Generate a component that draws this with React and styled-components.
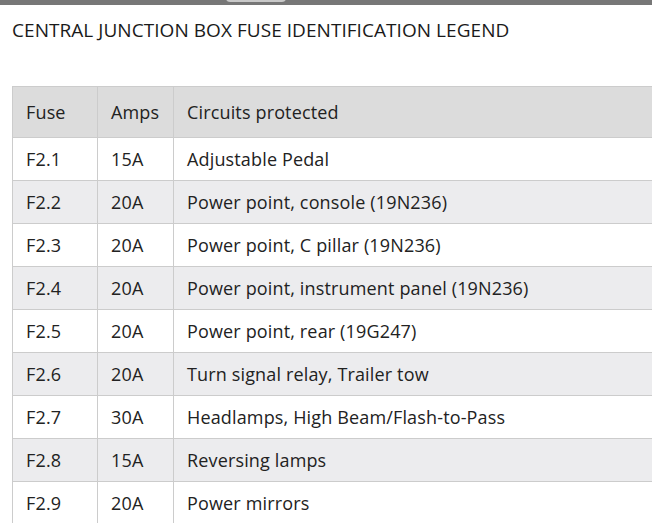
import React from 'react'
import styled, { createGlobalStyle } from 'styled-components'

const GlobalStyle = createGlobalStyle`
  body {
    margin: 0;
    background: #fff;
    overflow: hidden;
    font-family: "Open Sans", "Noto Sans", sans-serif;
    color: #222;
  }
`;

const Page = styled.div`
  width: 652px;
  height: 523px;
  overflow: hidden;
  position: relative;
`;

const TopBar = styled.div`
  height: 5px;
  background-color: #777;
  position: relative;
`;

const Pill = styled.div`
  position: absolute;
  left: 226px;
  top: -6px;
  width: 60px;
  height: 8px;
  border-radius: 4px;
  background: #c9c9c9;
`;

const Title = styled.h1`
  margin: 15px 0 0 12px;
  font-size: 19px;
  font-weight: 400;
  letter-spacing: 0.05px;
  color: #1a1a1a;
  line-height: 20px;
`;

const Table = styled.table`
  margin: 46px 0 0 12px;
  width: 700px;
  border-collapse: collapse;
  font-size: 18px;
  letter-spacing: 0.15px;
`;

const Th = styled.th`
  background-color: #dcdcdc;
  font-weight: 400;
  text-align: left;
  height: 50px;
  padding: 0 13px;
  border: 1px solid #cccccc;
  width: ${p => p.w || 'auto'};
`;

const Row = styled.tr`
  background-color: ${p => (p.alt ? '#ececee' : '#ffffff')};
`;

const Td = styled.td`
  height: 42px;
  padding: 0 13px;
  border: 1px solid #cccccc;
`;

const fuses = [
  ['F2.1', '15A', 'Adjustable Pedal'],
  ['F2.2', '20A', 'Power point, console (19N236)'],
  ['F2.3', '20A', 'Power point, C pillar (19N236)'],
  ['F2.4', '20A', 'Power point, instrument panel (19N236)'],
  ['F2.5', '20A', 'Power point, rear (19G247)'],
  ['F2.6', '20A', 'Turn signal relay, Trailer tow'],
  ['F2.7', '30A', 'Headlamps, High Beam/Flash-to-Pass'],
  ['F2.8', '15A', 'Reversing lamps'],
  ['F2.9', '20A', 'Power mirrors'],
]

const App = () => {
  return (
    <Page>
      <GlobalStyle />
      <TopBar>
        <Pill />
      </TopBar>
      <Title>CENTRAL JUNCTION BOX FUSE IDENTIFICATION LEGEND</Title>
      <Table>
        <thead>
          <tr>
            <Th w="58px">Fuse</Th>
            <Th w="49px">Amps</Th>
            <Th>Circuits protected</Th>
          </tr>
        </thead>
        <tbody>
          {fuses.map((f, i) => (
            <Row key={f[0]} alt={i % 2 === 1}>
              <Td>{f[0]}</Td>
              <Td>{f[1]}</Td>
              <Td>{f[2]}</Td>
            </Row>
          ))}
        </tbody>
      </Table>
    </Page>
  )
}

export default App
